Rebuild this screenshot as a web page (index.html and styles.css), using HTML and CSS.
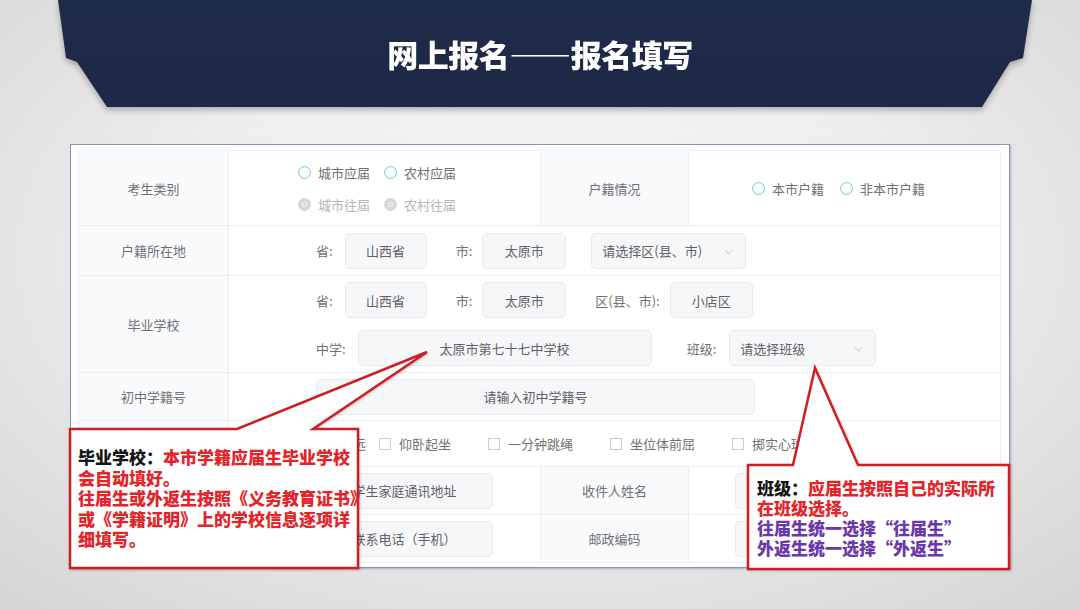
FILE: index.html
```html
<!DOCTYPE html>
<html lang="zh-CN">
<head>
<meta charset="utf-8">
<title>网上报名——报名填写</title>
<link rel="stylesheet" href="styles.css">
</head>
<body>
<div class="slide">
  <div class="banner-wrap">
    <header class="banner"><h1>网上报名——报名填写</h1></header>
  </div>

  <section class="panel">
    <div class="grid">
      <!-- row 1 -->
      <div class="cell label">考生类别</div>
      <div class="cell radios-col">
        <div class="rline">
          <span class="ritem"><span class="radio"></span>城市应届</span>
          <span class="ritem"><span class="radio"></span>农村应届</span>
        </div>
        <div class="rline disabled">
          <span class="ritem"><span class="radio off"></span>城市往届</span>
          <span class="ritem"><span class="radio off"></span>农村往届</span>
        </div>
      </div>
      <div class="cell label">户籍情况</div>
      <div class="cell radios-center">
        <span class="ritem"><span class="radio"></span>本市户籍</span>
        <span class="ritem"><span class="radio"></span>非本市户籍</span>
      </div>

      <!-- row 2 -->
      <div class="cell label">户籍所在地</div>
      <div class="cell span3 fields">
        <div class="fline">
          <span class="flabel">省:</span><span class="box w82">山西省</span>
          <span class="flabel">市:</span><span class="box w84">太原市</span>
          <span class="box select w155">请选择区(县、市)<svg class="chev" viewBox="0 0 10 6"><path d="M1 1l4 4 4-4"/></svg></span>
        </div>
      </div>

      <!-- row 3 -->
      <div class="cell label">毕业学校</div>
      <div class="cell span3 fields two">
        <div class="fline">
          <span class="flabel">省:</span><span class="box w82">山西省</span>
          <span class="flabel">市:</span><span class="box w84">太原市</span>
          <span class="flabel">区(县、市):</span><span class="box w83">小店区</span>
        </div>
        <div class="fline">
          <span class="flabel">中学:</span><span class="box w294">太原市第七十七中学校</span>
          <span class="flabel wide">班级:</span>
          <span class="box select w147">请选择班级<svg class="chev" viewBox="0 0 10 6"><path d="M1 1l4 4 4-4"/></svg></span>
        </div>
      </div>

      <!-- row 4 -->
      <div class="cell label">初中学籍号</div>
      <div class="cell span3 fields">
        <span class="box w439">请输入初中学籍号</span>
      </div>

      <!-- row 5 -->
      <div class="cell label"></div>
      <div class="cell span3 checks">
        <span class="citem first"><span class="check"></span>立定跳远</span>
        <span class="citem"><span class="check"></span>仰卧起坐</span>
        <span class="citem"><span class="check"></span>一分钟跳绳</span>
        <span class="citem"><span class="check"></span>坐位体前屈</span>
        <span class="citem"><span class="check"></span>掷实心球</span>
      </div>

      <!-- row 6 -->
      <div class="cell label"></div>
      <div class="cell fields"><span class="box w177">学生家庭通讯地址</span></div>
      <div class="cell label">收件人姓名</div>
      <div class="cell fields right"><span class="box w177"></span></div>

      <!-- row 7 -->
      <div class="cell label"></div>
      <div class="cell fields"><span class="box w177">联系电话（手机）</span></div>
      <div class="cell label">邮政编码</div>
      <div class="cell fields right"><span class="box w177"></span></div>
    </div>
  </section>

  <svg class="callouts" viewBox="0 0 1080 609" width="1080" height="609">
    <polygon points="70,429 237,429 427,352 313,429 358,429 358,568 70,568"/>
    <polygon points="748,465 793,465 815,368 858,465 1009,465 1009,569 748,569"/>
  </svg>

  <div class="note note-left">
    <span class="k">毕业学校：</span><span class="r">本市学籍应届生毕业学校<br>会自动填好。<br>往届生或外返生按照《义务教育证书》<br>或《学籍证明》上的学校信息逐项详<br>细填写。</span>
  </div>
  <div class="note note-right">
    <span class="k">班级：</span><span class="r">应届生按照自己的实际所<br>在班级选择。</span><br><span class="p">往届生统一选择“往届生”<br>外返生统一选择“外返生”</span>
  </div>
</div>
</body>
</html>
```

FILE: styles.css
```css
* { box-sizing: border-box; }

html, body {
  margin: 0;
  padding: 0;
}

body {
  width: 1080px;
  height: 609px;
  overflow: hidden;
  font-family: "Noto Sans CJK SC", "Noto Sans", sans-serif;
  background: radial-gradient(ellipse 75% 80% at 50% 42%, #f7f7f7 0%, #eeeeee 45%, #d4d4d4 100%);
}

.slide {
  position: relative;
  width: 1080px;
  height: 609px;
}

/* ---------- banner ---------- */
.banner-wrap {
  filter: drop-shadow(0 3px 3px rgba(0, 0, 0, 0.28));
}

.banner {
  margin-left: 58px;
  width: 974px;
  height: 107px;
  background: linear-gradient(180deg, #1f2b4a 0%, #1c2845 100%);
  clip-path: polygon(0 0, 974px 0, 965px 58px, 952px 62px, 924px 107px, 49px 107px, 19px 62px, 8px 58px);
  display: flex;
  justify-content: center;
  padding-top: 35px;
}

.banner h1 {
  margin: 0;
  color: #ffffff;
  font-size: 31px;
  line-height: 38px;
  font-weight: 900;
  letter-spacing: -0.5px;
  margin-left: -10px;
}

/* ---------- panel ---------- */
.panel {
  margin-top: 37px;
  margin-left: 70px;
  width: 940px;
  height: 424px;
  background: #ffffff;
  border: 1px solid #8595b3;
  box-shadow: 1px 1px 2px rgba(60, 70, 90, 0.35);
  padding: 5px 9px 0 7px;
}

.grid {
  display: grid;
  grid-template-columns: 150px 312px 148px 312px;
  grid-template-rows: 75px 50px 97px 48px 46px 48px 48px;
  border-top: 1px solid #ebeef3;
  border-left: 1px solid #ebeef3;
  font-size: 13px;
  color: #6e7177;
}

.cell {
  border-right: 1px solid #ebeef3;
  border-bottom: 1px solid #ebeef3;
  display: flex;
  align-items: center;
  background: #ffffff;
}

.label {
  justify-content: center;
  background: #f8fafb;
  color: #6e7177;
}

.span3 { grid-column: span 3; }

/* radios */
.radios-col {
  flex-direction: column;
  align-items: flex-start;
  justify-content: center;
  padding-left: 69px;
  gap: 12px;
}

.rline {
  display: flex;
  align-items: center;
  height: 20px;
}

.rline.disabled { color: #b4b7bc; }

.ritem {
  display: inline-flex;
  align-items: center;
  margin-right: 14px;
}

.radio {
  width: 13px;
  height: 13px;
  border-radius: 50%;
  border: 1px solid #7ccfcf;
  background: #ffffff;
  margin-right: 7px;
  box-shadow: inset 0 0 0 1px #eaf7f7;
}

.radio.off {
  border-color: #cfd1d5;
  background: #d6d8dc;
  box-shadow: inset 0 0 0 3px #d6d8dc, inset 0 0 0 4px #f2f2f2;
}

.radios-center {
  justify-content: center;
  padding-right: 12px;
}

.radios-center .ritem { margin-right: 0; }
.radios-center .ritem + .ritem { margin-left: 16px; }

/* fields */
.fields {
  flex-direction: column;
  align-items: flex-start;
  justify-content: center;
  padding-left: 87px;
}

.fields.two { gap: 12px; }

.fields.right { padding-left: 46px; }

.fline {
  display: flex;
  align-items: center;
}

.flabel {
  margin-right: 10px;
  color: #6e7177;
}

.flabel:first-child { margin-right: 12px; }

.box + .flabel { margin-left: 29px; }
.box + .flabel.wide { margin-left: 35px; margin-right: 13px; }

.box {
  height: 36px;
  border: 1px solid #e6e9ee;
  border-radius: 5px;
  background: #f6f7f9;
  display: inline-flex;
  align-items: center;
  justify-content: center;
  color: #5f6268;
  font-size: 13px;
}

.box.select {
  justify-content: flex-start;
  padding-left: 10px;
  position: relative;
}

.box + .box.select { margin-left: 25px; }

.chev {
  position: absolute;
  right: 12px;
  top: 15px;
  width: 9px;
  height: 6px;
  fill: none;
  stroke: #cfd2d7;
  stroke-width: 1.2;
}

.w82 { width: 82px; }
.w83 { width: 83px; }
.w84 { width: 84px; }
.w147 { width: 147px; }
.w155 { width: 155px; }
.w177 { width: 177px; }
.w294 { width: 294px; }
.w439 { width: 439px; }

/* checkboxes */
.checks {
  padding-left: 65px;
}

.citem {
  display: inline-flex;
  align-items: center;
  margin-right: 37px;
}

.citem.first { margin-right: 13px; }

.check {
  width: 12px;
  height: 12px;
  border: 1px solid #c9ccd1;
  background: #ffffff;
  margin-right: 8px;
}

/* ---------- callouts ---------- */
.callouts {
  position: absolute;
  left: 0;
  top: 0;
  pointer-events: none;
  filter: drop-shadow(1px 1px 1px rgba(0, 0, 0, 0.2));
}

.callouts polygon {
  fill: #ffffff;
  stroke: #cf1d22;
  stroke-width: 2.5;
  stroke-linejoin: miter;
}

.note {
  position: absolute;
  font-family: "Noto Sans CJK SC", sans-serif;
  font-weight: 900;
  font-size: 17px;
  line-height: 20.5px;
  white-space: nowrap;
}

.note .k { color: #151515; }
.note .r { color: #e2242b; }
.note .p { color: #6a38a8; }

.note-left {
  left: 78px;
  top: 447px;
}

.note-right {
  left: 757px;
  top: 478px;
  line-height: 20px;
}
```
